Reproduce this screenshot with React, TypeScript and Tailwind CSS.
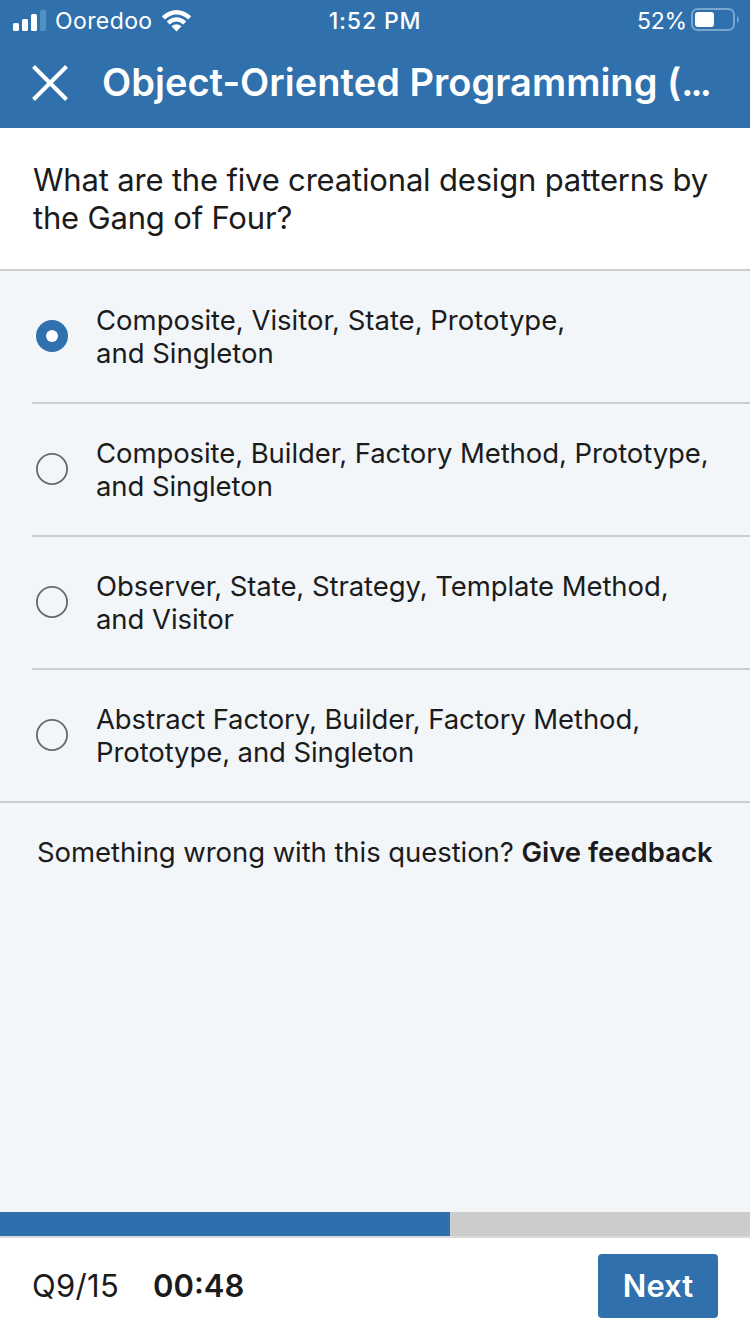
import React from "react";

const options = [
  { lines: ["Composite, Visitor, State, Prototype,", "and Singleton"], tracking: "tracking-[-0.01px]" },
  { lines: ["Composite, Builder, Factory Method, Prototype,", "and Singleton"], tracking: "tracking-[-0.08px]" },
  { lines: ["Observer, State, Strategy, Template Method,", "and Visitor"], tracking: "tracking-[-0.07px]" },
  { lines: ["Abstract Factory, Builder, Factory Method,", "Prototype, and Singleton"], tracking: "tracking-[-0.1px]" },
];

function StatusBar() {
  return (
    <div className="grid h-10 grid-cols-3 items-center text-[23px] leading-10">
      <div className="flex items-center pl-[13px]">
        <svg width="33" height="21" viewBox="0 0 33 21" fill="white">
          <rect x="0" y="13" width="6" height="8" rx="1.5" />
          <rect x="9" y="9" width="6" height="12" rx="1.5" />
          <rect x="18" y="4" width="6" height="17" rx="1.5" />
          <rect x="27" y="0" width="6" height="21" rx="1.5" fill="#5192c3" />
        </svg>
        <span className="ml-[9px] w-[106px] pt-[2px] leading-[38px] tracking-[0.4px]">Ooredoo</span>
        <svg width="31" height="23" viewBox="0 0 31 23" fill="white">
          <path d="M.8 7.2Q15.5-5.4 30.2 7.2L27.1 10.5Q15.5.5 3.9 10.5Z" />
          <path d="M5.7 12.4Q15.5 4 25.3 12.4L22.3 15.4Q15.5 9.5 8.7 15.4Z" />
          <path d="M10.5 17.3Q15.5 13.2 20.5 17.3L15.5 22.5Z" />
        </svg>
      </div>
      <div className="pt-[2px] text-center font-medium leading-[38px] tracking-[0.85px]">1:52 PM</div>
      <div className="flex items-center justify-end pr-[11px]">
        <span className="mr-[4px] pt-[2px] leading-[38px] tracking-[-0.2px]">52%</span>
        <svg width="48" height="24" viewBox="0 0 48 24">
          <rect x="1" y="1" width="42" height="21" rx="5.5" fill="none" stroke="#78a6cf" strokeWidth="2" />
          <rect x="4" y="4" width="19" height="15" rx="3" fill="white" />
          <path d="M46 8Q48 9 48 11.5T46 15Z" fill="#78a6cf" />
        </svg>
      </div>
    </div>
  );
}

export default function App() {
  return (
    <main className="flex h-[1334px] w-[750px] flex-col overflow-hidden bg-[#f2f6f9] font-['Inter',sans-serif] text-[#1b1b1c]">
      <header className="h-32 shrink-0 bg-[#3070ac] text-white">
        <StatusBar />
        <div className="flex h-[88px] items-center pb-[2px]">
          <button aria-label="Close" className="ml-8 mr-[34px] w-9">
            <svg width="36" height="36" viewBox="0 0 36 36" stroke="white" strokeWidth="4">
              <path d="M1.5 1.5 34.5 34.5M34.5 1.5 1.5 34.5" />
            </svg>
          </button>
          <h1 className="whitespace-nowrap pb-[2px] text-[38px] font-semibold leading-[46px] tracking-[0.03px]">
            Object-Oriented Programming (<span className="tracking-[-2.9px]">...</span>
          </h1>
        </div>
      </header>
      <section className="h-[143px] shrink-0 border-b-2 border-[#cccdcf] bg-white pl-[33px] pt-[33px]">
        <h2 className="text-[31px] leading-[38px] tracking-[-0.18px]">What are the five creational design patterns by<br />the Gang of Four?</h2>
      </section>
      <div className="shrink-0 border-b-2 border-[#cccdcf]">
        {options.map(({ lines, tracking }, index) => (
          <label key={index} className="ml-8 flex h-[133px] items-center border-b-2 border-[#cccdcf] last:h-[131px] last:border-b-0">
            <span className="mb-px ml-1 mr-7 w-8">
              <svg className="block" width="32" height="32" viewBox="0 0 32 32">
                {index === 0 ? (
                  <><circle cx="16" cy="16" r="16" fill="#3070ac" /><circle cx="16" cy="16" r="6" fill="white" /></>
                ) : (
                  <circle cx="16" cy="16" r="15.1" fill="none" stroke="#66696c" strokeWidth="1.8" />
                )}
              </svg>
            </span>
            <span className={`whitespace-nowrap text-[27.5px] leading-[33px] ${tracking}`}>{lines[0]}<br />{lines[1]}</span>
          </label>
        ))}
      </div>
      <p className="mt-8 pl-[37px] text-[27.5px] leading-[34px] tracking-[-0.07px]">
        Something wrong with this question? <a className="font-semibold tracking-[0px]">Give feedback</a>
      </p>
      <footer className="mt-auto shrink-0">
        <div className="h-6 bg-[#cccccc]"><div className="h-full w-3/5 bg-[#2e6fad]" /></div>
        <div className="flex h-[98px] items-center border-t-2 border-[#dadbdd] bg-white pl-8 pr-8">
          <span className="w-[121px] text-[31px] tracking-[0.3px]">Q9/15</span>
          <span className="text-[31px] font-semibold">00:48</span>
          <button className="ml-auto h-16 w-[120px] rounded-[4px] bg-[#3070ac] text-[31px] font-semibold text-white">Next</button>
        </div>
      </footer>
    </main>
  );
}
